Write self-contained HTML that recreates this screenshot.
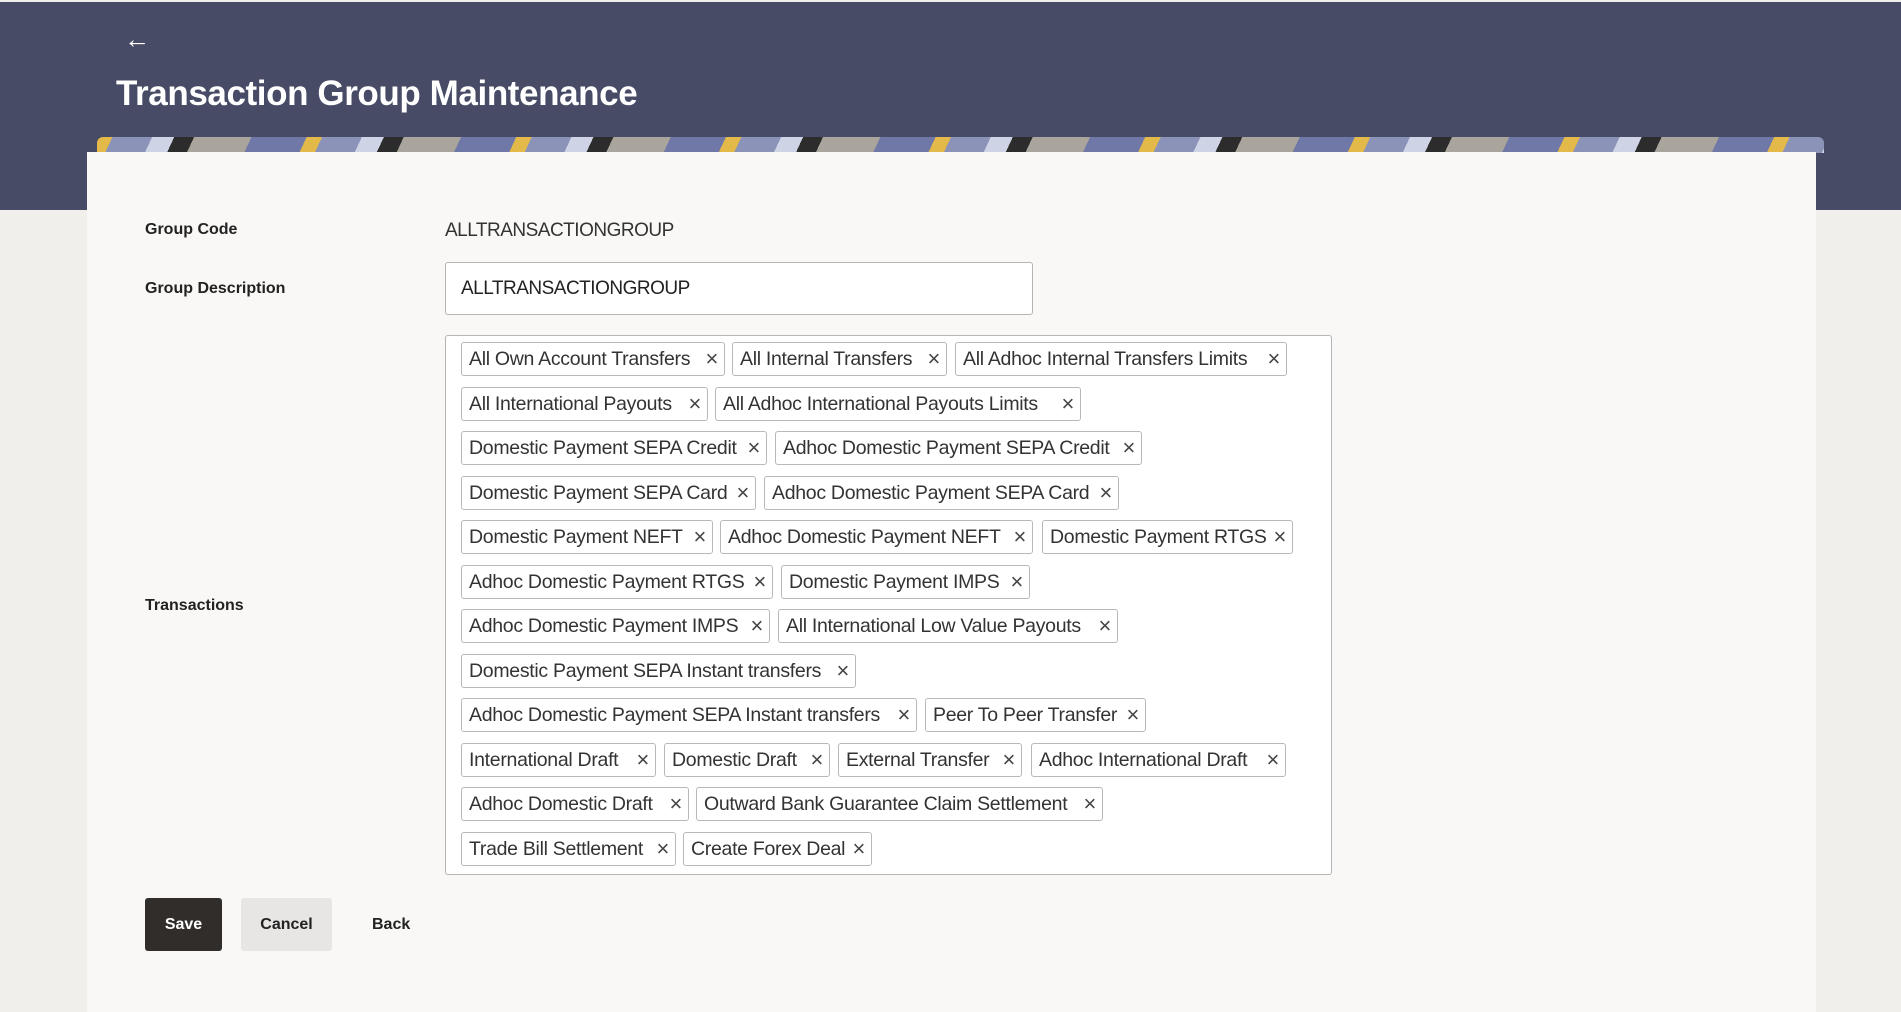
<!DOCTYPE html>
<html><head><meta charset="utf-8"><style>
body{margin:0;width:1901px;height:999px;overflow:hidden;background:#f1efec;font-family:"Liberation Sans",sans-serif;position:relative}
.hdr{position:absolute;left:0;top:2px;width:1901px;height:208px;background:#474b66}
.band{position:absolute;left:97px;top:137px;width:1727px;height:16px;border-radius:6px 6px 0 0;background:repeating-linear-gradient(115deg,#e3b94a 0 14px,#8c93b8 14px 50px,#cfd3e6 50px 70px,#2c2c2c 70px 88px,#a9a59c 88px 140px,#6f78a6 140px 190px)}
.card{position:absolute;left:87px;top:152px;width:1729px;height:860px;background:#f9f8f6}
.abs{position:absolute}
.lbl{font-size:16px;font-weight:bold;color:#222}
.chip{position:absolute;height:34px;border:1px solid #b8b8b8;border-radius:3px;background:#fff;box-sizing:border-box;font-size:19.5px;color:#333;line-height:32px;padding-left:7px;white-space:nowrap;overflow:hidden;letter-spacing:-0.3px}
.chip span{position:absolute;right:6px;top:0;font-size:22px;color:#444}
</style></head><body>
<div class="hdr"></div>
<div class="abs" style="left:124px;top:24px;color:#fff;font-size:26px">&#8592;</div>
<div class="abs" style="left:116px;top:74px;color:#fff;font-size:35px;font-weight:bold;letter-spacing:-0.4px">Transaction Group Maintenance</div>
<div class="band"></div>
<div class="card"></div>
<div class="abs lbl" style="left:145px;top:221px">Group Code</div>
<div class="abs" style="left:445px;top:220px;font-size:19px;color:#333;letter-spacing:-0.5px">ALLTRANSACTIONGROUP</div>
<div class="abs lbl" style="left:145px;top:280px">Group Description</div>
<div class="abs" style="left:445px;top:262px;width:588px;height:53px;box-sizing:border-box;border:1px solid #b5b5b5;border-radius:3px;background:#fff;font-size:19px;color:#222;line-height:51px;padding-left:15px;letter-spacing:-0.5px">ALLTRANSACTIONGROUP</div>
<div class="abs lbl" style="left:145px;top:597px">Transactions</div>
<div class="abs" style="left:445px;top:335px;width:887px;height:540px;box-sizing:border-box;border:1px solid #b5b5b5;border-radius:3px;background:#fff"></div>

<div class="chip" style="left:461px;top:342px;width:264px">All Own Account Transfers<span>×</span></div>
<div class="chip" style="left:732px;top:342px;width:215px">All Internal Transfers<span>×</span></div>
<div class="chip" style="left:955px;top:342px;width:332px">All Adhoc Internal Transfers Limits<span>×</span></div>

<div class="chip" style="left:461px;top:387px;width:247px">All International Payouts<span>×</span></div>
<div class="chip" style="left:715px;top:387px;width:366px">All Adhoc International Payouts Limits<span>×</span></div>

<div class="chip" style="left:461px;top:431px;width:306px">Domestic Payment SEPA Credit<span>×</span></div>
<div class="chip" style="left:775px;top:431px;width:367px">Adhoc Domestic Payment SEPA Credit<span>×</span></div>

<div class="chip" style="left:461px;top:476px;width:295px">Domestic Payment SEPA Card<span>×</span></div>
<div class="chip" style="left:764px;top:476px;width:355px">Adhoc Domestic Payment SEPA Card<span>×</span></div>

<div class="chip" style="left:461px;top:520px;width:252px">Domestic Payment NEFT<span>×</span></div>
<div class="chip" style="left:720px;top:520px;width:313px">Adhoc Domestic Payment NEFT<span>×</span></div>
<div class="chip" style="left:1042px;top:520px;width:251px">Domestic Payment RTGS<span>×</span></div>

<div class="chip" style="left:461px;top:565px;width:312px">Adhoc Domestic Payment RTGS<span>×</span></div>
<div class="chip" style="left:781px;top:565px;width:249px">Domestic Payment IMPS<span>×</span></div>

<div class="chip" style="left:461px;top:609px;width:309px">Adhoc Domestic Payment IMPS<span>×</span></div>
<div class="chip" style="left:778px;top:609px;width:340px">All International Low Value Payouts<span>×</span></div>

<div class="chip" style="left:461px;top:654px;width:395px">Domestic Payment SEPA Instant transfers<span>×</span></div>

<div class="chip" style="left:461px;top:698px;width:456px">Adhoc Domestic Payment SEPA Instant transfers<span>×</span></div>
<div class="chip" style="left:925px;top:698px;width:221px">Peer To Peer Transfer<span>×</span></div>

<div class="chip" style="left:461px;top:743px;width:195px">International Draft<span>×</span></div>
<div class="chip" style="left:664px;top:743px;width:166px">Domestic Draft<span>×</span></div>
<div class="chip" style="left:838px;top:743px;width:184px">External Transfer<span>×</span></div>
<div class="chip" style="left:1031px;top:743px;width:255px">Adhoc International Draft<span>×</span></div>

<div class="chip" style="left:461px;top:787px;width:228px">Adhoc Domestic Draft<span>×</span></div>
<div class="chip" style="left:696px;top:787px;width:407px">Outward Bank Guarantee Claim Settlement<span>×</span></div>

<div class="chip" style="left:461px;top:832px;width:215px">Trade Bill Settlement<span>×</span></div>
<div class="chip" style="left:683px;top:832px;width:189px">Create Forex Deal<span>×</span></div>

<div class="abs" style="left:145px;top:898px;width:77px;height:53px;background:#312d2a;border-radius:3px;color:#fff;font-weight:bold;font-size:16px;text-align:center;line-height:53px">Save</div>
<div class="abs" style="left:241px;top:898px;width:91px;height:53px;background:#e8e6e4;border-radius:3px;color:#222;font-weight:bold;font-size:16px;text-align:center;line-height:53px">Cancel</div>
<div class="abs" style="left:372px;top:898px;height:53px;color:#222;font-weight:bold;font-size:16px;line-height:53px">Back</div>
</body></html>
